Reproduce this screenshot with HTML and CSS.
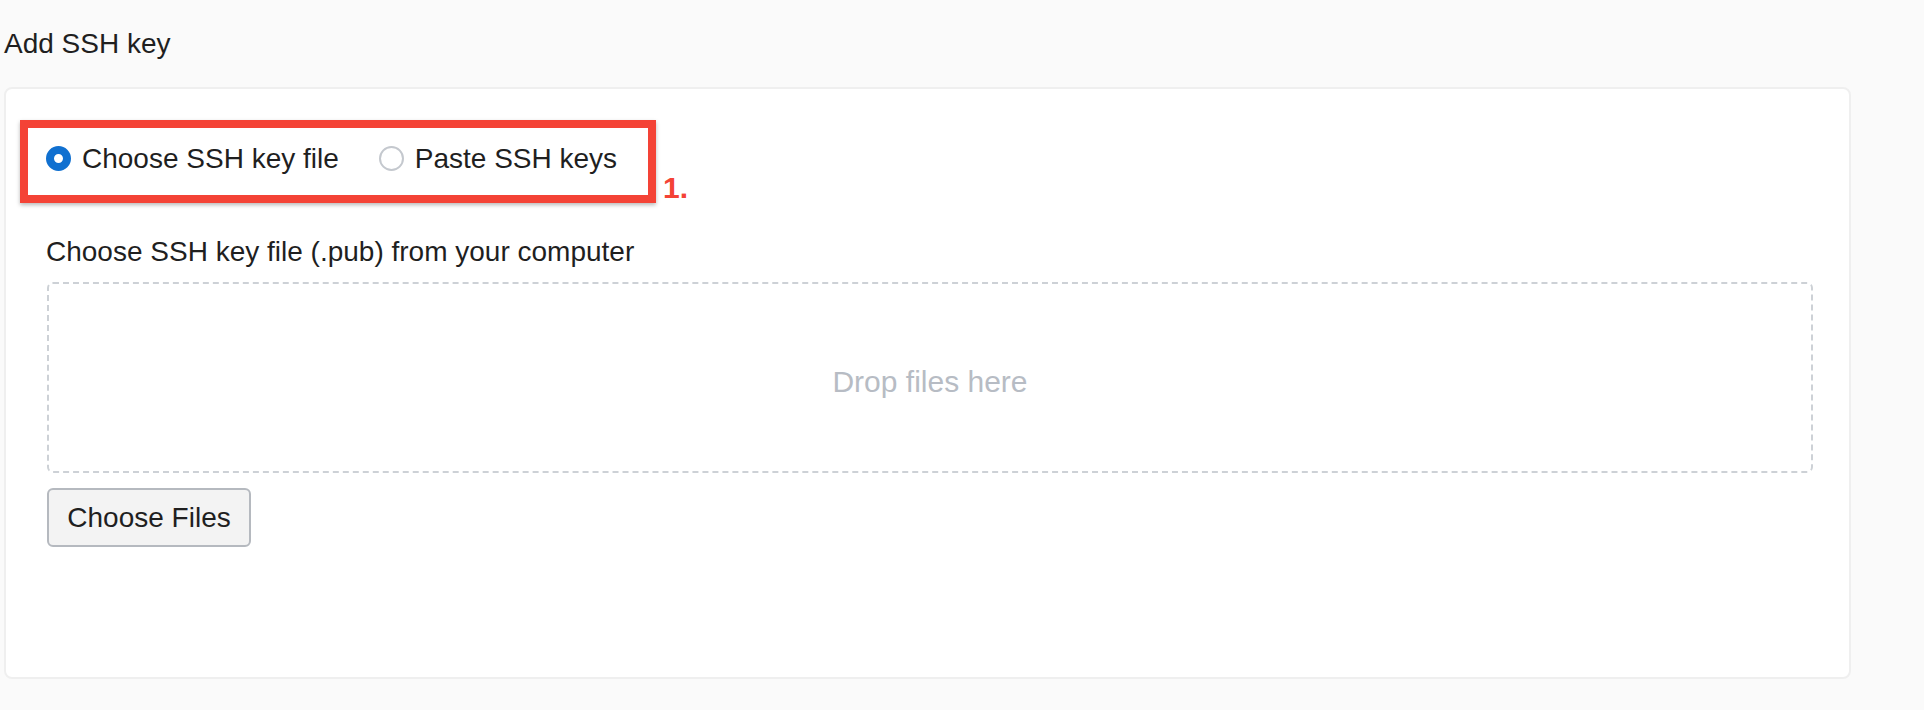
FILE: index.html
```html
<!DOCTYPE html>
<html lang="en">
<head>
<meta charset="utf-8">
<title>Add SSH key</title>
<link rel="stylesheet" href="styles.css">
</head>
<body>
  <h1 class="page-title">Add SSH key</h1>
  <section class="card">
    <div class="highlight">
      <label class="radio">
        <span class="radio-dot checked"></span>
        <span class="radio-text">Choose SSH key file</span>
      </label>
      <label class="radio">
        <span class="radio-dot"></span>
        <span class="radio-text">Paste SSH keys</span>
      </label>
      <span class="step">1.</span>
    </div>
    <div class="form-body">
      <div class="field-label">Choose SSH key file (.pub) from your computer</div>
      <div class="dropzone">Drop files here</div>
      <button class="btn" type="button">Choose Files</button>
    </div>
  </section>
</body>
</html>
```

FILE: styles.css
```css
html, body {
  margin: 0;
  padding: 0;
}
body {
  background: #fafafa;
  font-family: "Liberation Sans", Arial, Helvetica, sans-serif;
  color: #222;
  width: 1924px;
  height: 710px;
  overflow: hidden;
}
.page-title {
  margin: 28px 0 0 4px;
  font-size: 28px;
  line-height: 32px;
  font-weight: normal;
  color: #1f1f1f;
}
.card {
  box-sizing: border-box;
  margin: 27px 0 0 4px;
  width: 1847px;
  height: 592px;
  background: #fff;
  border: 2px solid #efefef;
  border-radius: 8px;
  padding: 31px 0 0 14px;
}
.highlight {
  position: relative;
  box-sizing: border-box;
  width: 636px;
  height: 83px;
  border: 8px solid #f44336;
  box-shadow: 0 2px 4px rgba(0, 0, 0, 0.28);
  display: flex;
  align-items: center;
  padding: 0 0 6px 18px;
  gap: 40px;
}
.radio {
  display: flex;
  align-items: center;
  gap: 11px;
  font-size: 28px;
  line-height: 32px;
  color: #1f1f1f;
}
.radio-dot {
  box-sizing: border-box;
  width: 25px;
  height: 25px;
  border-radius: 50%;
  border: 2px solid #c4c8ce;
  background: #fff;
  flex: none;
}
.radio-dot.checked {
  border: 8px solid #1070d0;
  background: #fff;
}
.step {
  position: absolute;
  left: calc(100% + 15px);
  bottom: -10px;
  font-size: 30px;
  font-weight: bold;
  line-height: 34px;
  color: #f44336;
}
.form-body {
  padding: 33px 36px 0 27px;
}
.field-label {
  font-size: 28px;
  line-height: 32px;
  color: #1f1f1f;
  margin-left: -1px;
}
.dropzone {
  box-sizing: border-box;
  margin-top: 14px;
  height: 191px;
  padding-top: 8px;
  border: 2px dashed #cdd1d6;
  border-radius: 6px;
  display: flex;
  align-items: center;
  justify-content: center;
  font-size: 30px;
  color: #b7bcc4;
}
.btn {
  box-sizing: border-box;
  margin-top: 15px;
  width: 204px;
  height: 59px;
  padding: 0;
  border: 2px solid #b5b9bf;
  border-radius: 6px;
  background: #f3f3f3;
  font-family: "Liberation Sans", Arial, Helvetica, sans-serif;
  font-size: 28px;
  color: #1f1f1f;
  display: block;
}
```
